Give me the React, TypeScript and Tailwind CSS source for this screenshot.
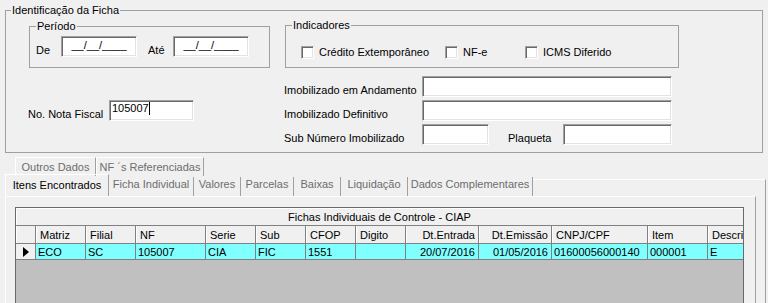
const edit =
    "bg-white border border-t-[#a0a0a0] border-l-[#a0a0a0] border-b-white border-r-white shadow-[inset_1px_1px_0_#696969,inset_-1px_-1px_0_#e3e3e3]"

function Group({ title, className, children, legendLeft = "left-[6px]" }: { title: string, className: string, children?: any, legendLeft?: string }) {
    return (
        <div className={`relative border border-[#a0a0a0] ${className}`}>
            <span className={`absolute -top-[7px] ${legendLeft} px-[1px] bg-[#f0f0f0] leading-[13px] whitespace-nowrap`}>{title}</span>
            {children}
        </div>
    )
}

function Check({ label, className }: { label: string, className: string }) {
    return (
        <div className={`flex items-center gap-[5px] ${className}`}>
            <span className={`w-[13px] h-[13px] ${edit}`} />
            <span className="whitespace-nowrap">{label}</span>
        </div>
    )
}

function Field({ label, children }: { label: string, children?: any }) {
    return (
        <div className="flex items-end h-[21px]">
            <span className="w-[138px] -ml-[1px] whitespace-nowrap">{label}</span>
            {children}
        </div>
    )
}

const upperTabs = [
    { label: "Outros Dados", w: "w-[81px]" },
    { label: "NF ´s Referenciadas", w: "w-[108px]" },
]

const lowerTabs = [
    { label: "Ficha Individual", w: "w-[85px]" },
    { label: "Valores", w: "w-[47px]" },
    { label: "Parcelas", w: "w-[53px]" },
    { label: "Baixas", w: "w-[47px]" },
    { label: "Liquidação", w: "w-[67px]" },
    { label: "Dados Complementares", w: "w-[125px]" },
]

const columns = [
    { title: "Matriz", w: "w-[50px]", value: "ECO" },
    { title: "Filial", w: "w-[50px]", value: "SC" },
    { title: "NF", w: "w-[70px]", value: "105007" },
    { title: "Serie", w: "w-[50px]", value: "CIA" },
    { title: "Sub", w: "w-[50px]", value: "FIC" },
    { title: "CFOP", w: "w-[50px]", value: "1551" },
    { title: "Digito", w: "w-[50px]", value: "" },
    { title: "Dt.Entrada", w: "w-[73px]", value: "20/07/2016", right: true },
    { title: "Dt.Emissão", w: "w-[73px]", value: "01/05/2016", right: true },
    { title: "CNPJ/CPF", w: "w-[96px]", value: "01600056000140" },
    { title: "Item", w: "w-[60px]", value: "000001" },
    { title: "Descrição", w: "w-[120px]", value: "E" },
]

export default function App() {
    return (
        <main className="w-[768px] h-[303px] overflow-hidden bg-[#f0f0f0] text-black text-[11px] leading-[13px] font-['Liberation_Sans',Arial,sans-serif]">
            <Group title="Identificação da Ficha" legendLeft="left-[5px]" className="ml-[5px] mt-[10px] w-[758px] h-[143px]">
                <div className="flex pl-[23px] pt-[14px]">
                    <div className="w-[241px] mt-[1px]">
                        <Group title="Período" className="h-[42px]">
                            <div className="flex items-end pt-[9px] pl-[6px]">
                                <span className="w-[25px]">De</span>
                                <div className={`w-[76px] h-[21px] text-center pt-[2px] ${edit}`}>__/__/____</div>
                                <span className="w-[25px] ml-[11px]">Até</span>
                                <div className={`w-[76px] h-[21px] text-center pt-[2px] ${edit}`}>__/__/____</div>
                            </div>
                        </Group>
                        <div className="flex items-end mt-[32px] -ml-[1px]">
                            <span className="w-[81px] whitespace-nowrap">No. Nota Fiscal</span>
                            <div className={`w-[85px] h-[21px] pl-[2px] pt-[1px] flex items-start ${edit}`}>
                                <span>105007</span>
                                <span className="w-[1px] h-[13px] bg-black" />
                            </div>
                        </div>
                    </div>

                    <div className="w-[394px] ml-[15px]">
                        <Group title="Indicadores" className="h-[43px]">
                            <div className="flex pt-[20px] pl-[15px]">
                                <Check label="Crédito Extemporâneo" className="w-[144px]" />
                                <Check label="NF-e" className="w-[80px]" />
                                <Check label="ICMS Diferido" className="w-[120px]" />
                            </div>
                        </Group>
                        <div className="flex flex-col gap-[3px] mt-[8px]">
                            <Field label="Imobilizado em Andamento">
                                <div className={`w-[250px] h-[21px] ${edit}`} />
                            </Field>
                            <Field label="Imobilizado Definitivo">
                                <div className={`w-[250px] h-[21px] ${edit}`} />
                            </Field>
                            <Field label="Sub Número Imobilizado">
                                <div className={`w-[67px] h-[21px] ${edit}`} />
                                <span className="w-[55px] ml-[19px]">Plaqueta</span>
                                <div className={`w-[109px] h-[21px] ${edit}`} />
                            </Field>
                        </div>
                    </div>
                </div>
            </Group>

            <div className="ml-[5px] w-[761px] mt-[4px]">
                <div className="flex pl-[10px] h-[17px]">
                    {upperTabs.map(tab => (
                        <div key={tab.label} className={`${tab.w} h-[19px] border-t border-l border-white border-r border-r-[#a0a0a0] text-center pt-[3px] text-[#6d6d6d] whitespace-nowrap`}>
                            {tab.label}
                        </div>
                    ))}
                </div>

                <div className="flex items-end h-[22px]">
                    <div className="w-[104px] h-[22px] border-t border-l border-white border-r border-r-[#a0a0a0] text-center pt-[4px] whitespace-nowrap">
                        Itens Encontrados
                    </div>
                    {lowerTabs.map(tab => (
                        <div key={tab.label} className={`${tab.w} h-[19px] border-r border-[#a0a0a0] text-center pt-[1px] text-[#6d6d6d] whitespace-nowrap`}>
                            {tab.label}
                        </div>
                    ))}
                    <div className="flex-1 h-[17px] border-t border-white border-r border-r-[#a0a0a0]" />
                </div>

                <div className="h-[110px] border-r border-[#a0a0a0]">
                    <div className="w-[751px] h-full border-t border-l border-white border-r border-r-[#a0a0a0] pt-[10px] pl-[9px]">
                        <div className="w-[729px] h-[100px] overflow-hidden border border-[#696969] bg-[#c0c0c0]">
                            <div className="h-[18px] bg-[#f0f0f0] border-b border-[#808080] shadow-[inset_1px_1px_0_#ffffff] text-center pt-[3px] whitespace-nowrap">
                                Fichas Individuais de Controle - CIAP
                            </div>
                            <div className="flex h-[18px] w-[900px] bg-[#f0f0f0] border-b border-[#808080]">
                                <div className="w-[20px] shrink-0 border-r border-[#808080] shadow-[inset_1px_0_0_#ffffff]" />
                                {columns.map(col => (
                                    <div key={col.title} className={`${col.w} shrink-0 border-r border-[#808080] shadow-[inset_1px_0_0_#ffffff] pt-[3px] whitespace-nowrap ${col.right ? "text-right pr-[3px]" : "pl-[4px]"}`}>
                                        {col.title}
                                    </div>
                                ))}
                            </div>
                            <div className="flex h-[16px] w-[900px] border-b border-[#808080]">
                                <div className="w-[20px] shrink-0 bg-[#f0f0f0] border-r border-[#808080] flex items-center pl-[7px]">
                                    <svg width="6" height="10" viewBox="0 0 6 10"><path d="M0 0 L6 5 L0 10 Z" fill="#000" /></svg>
                                </div>
                                {columns.map(col => (
                                    <div key={col.title} className={`${col.w} shrink-0 bg-[#80ffff] border-r border-[#808080] pt-[2px] whitespace-nowrap ${col.right ? "text-right pr-[3px]" : "pl-[2px]"}`}>
                                        {col.value}
                                    </div>
                                ))}
                            </div>
                        </div>
                    </div>
                </div>
            </div>
        </main>
    )
}
